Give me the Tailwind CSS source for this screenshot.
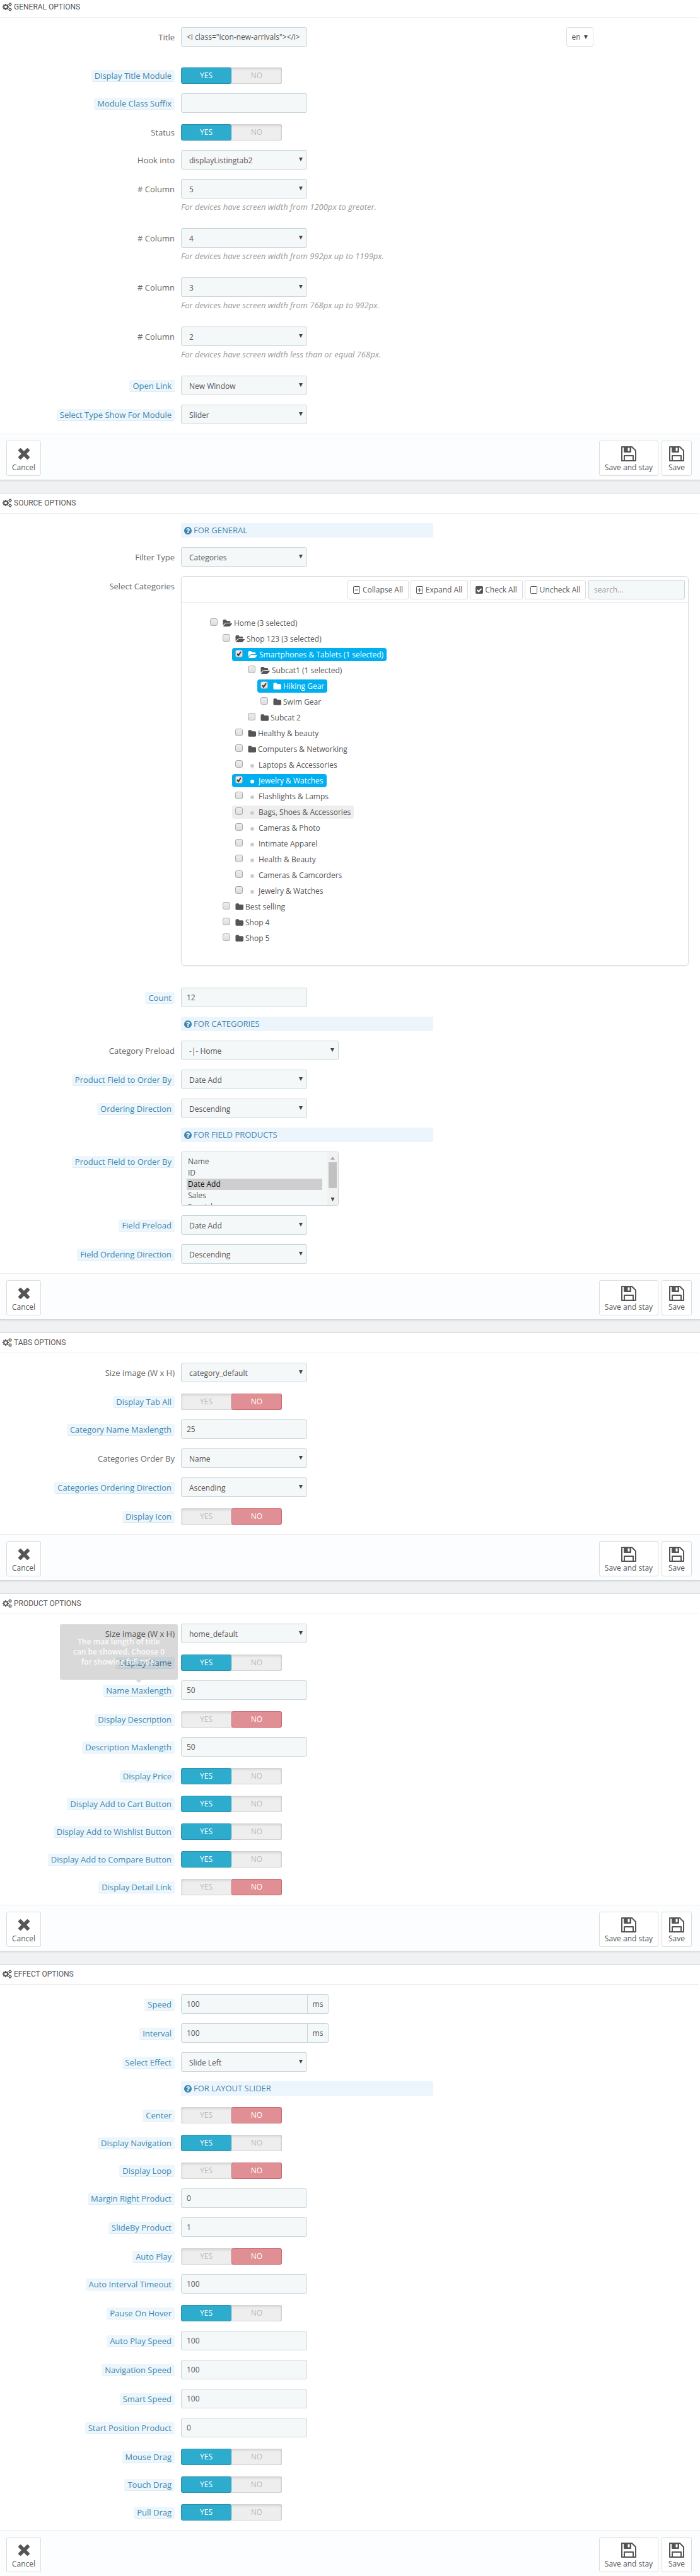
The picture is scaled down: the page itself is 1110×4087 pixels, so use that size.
<!DOCTYPE html>
<html lang="en">
<head>
<meta charset="utf-8">
<meta name="viewport" content="width=device-width, initial-scale=1">
<title>Listing tabs module options</title>
<script src="https://cdn.jsdelivr.net/npm/@tailwindcss/browser@4"></script>
</head>
<body class="bg-[#eff1f2] font-['Open_Sans',sans-serif] text-xs text-[#555]">

<svg class="hidden" aria-hidden="true">
  <symbol id="cogs" viewBox="0 0 1920 1792"><path fill="currentColor" d="M896 896q0-106-75-181t-181-75-181 75-75 181 75 181 181 75 181-75 75-181zm768 512q0-52-38-90t-90-38-90 38-38 90q0 53 37.5 90.5t90.5 37.5 90.5-37.5 37.5-90.5zm0-1024q0-52-38-90t-90-38-90 38-38 90q0 53 37.5 90.5t90.5 37.5 90.5-37.5 37.5-90.5zm-384 421v185q0 10-7 19.5t-16 10.5l-155 24q-11 35-32 76 34 48 90 115 7 11 7 20 0 12-7 19-23 30-82.5 89.5t-78.5 59.5q-11 0-21-7l-115-90q-37 19-77 31-11 108-23 155-7 24-30 24h-186q-11 0-20-7.5t-10-17.5l-23-153q-34-10-75-31l-118 89q-7 7-20 7-11 0-21-8-144-133-144-160 0-9 7-19 10-14 41-53t47-61q-23-44-35-82l-152-24q-10-1-17-9.5t-7-19.5v-185q0-10 7-19.5t16-10.5l155-24q11-35 32-76-34-48-90-115-7-11-7-20 0-12 7-20 22-30 82-89t79-59q11 0 21 7l115 90q34-18 77-32 11-108 23-154 7-24 30-24h186q11 0 20 7.5t10 17.5l23 153q34 10 75 31l118-89q8-7 20-7 11 0 21 8 144 133 144 160 0 8-7 19-12 16-42 54t-45 60q23 48 34 82l152 23q10 2 17 10.5t7 19.5zm640 533v140q0 16-149 31-12 27-30 52 51 113 51 138 0 4-4 7-122 71-124 71-8 0-46-47t-52-68q-20 2-30 2t-30-2q-14 21-52 68t-46 47q-2 0-124-71-4-3-4-7 0-25 51-138-18-25-30-52-149-15-149-31v-140q0-16 149-31 13-29 30-52-51-113-51-138 0-4 4-7 4-2 35-20t59-34 30-16q8 0 46 46.5t52 67.5q20-2 30-2t30 2q51-71 92-112l6-2q4 0 124 70 4 3 4 7 0 25-51 138 17 23 30 52 149 15 149 31zm0-1024v140q0 16-149 31-12 27-30 52 51 113 51 138 0 4-4 7-122 71-124 71-8 0-46-47t-52-68q-20 2-30 2t-30-2q-14 21-52 68t-46 47q-2 0-124-71-4-3-4-7 0-25 51-138-18-25-30-52-149-15-149-31v-140q0-16 149-31 13-29 30-52-51-113-51-138 0-4 4-7 4-2 35-20t59-34 30-16q8 0 46 46.5t52 67.5q20-2 30-2t30 2q51-71 92-112l6-2q4 0 124 70 4 3 4 7 0 25-51 138 17 23 30 52 149 15 149 31z"/></symbol>
  <symbol id="folder" viewBox="0 0 1728 1792"><path fill="currentColor" d="M1728 608v704q0 92-66 158t-158 66h-1216q-92 0-158-66t-66-158v-960q0-92 66-158t158-66h320q92 0 158 66t66 158v32h672q92 0 158 66t66 158z"/></symbol>
  <symbol id="folder-open" viewBox="0 0 1943 1792"><path fill="currentColor" d="M1943 952q0 31-31 66l-336 396q-43 51-120.5 86.5t-143.5 35.5h-1088q-34 0-60.5-13t-26.5-43q0-31 31-66l336-396q43-51 120.5-86.5t143.5-35.5h1088q34 0 60.5 13t26.5 43zm-343-344v160h-832q-94 0-197 47.5t-164 119.5l-337 396-5 6q0-4-.5-12.5t-.5-12.5v-960q0-92 66-158t158-66h320q92 0 158 66t66 158v32h544q92 0 158 66t66 158z"/></symbol>
  <symbol id="question" viewBox="128 128 1536 1536"><path fill="currentColor" d="M1024 1376v-192q0-14-9-23t-23-9h-192q-14 0-23 9t-9 23v192q0 14 9 23t23 9h192q14 0 23-9t9-23zm256-672q0-88-55.5-163t-138.5-116-170-41q-243 0-371 213-15 24 8 42l132 100q7 6 19 6 16 0 25-12 53-68 86-92 34-24 86-24 48 0 85.5 26t37.5 59q0 38-20 61t-68 45q-63 28-115.5 86.5t-52.5 125.5v36q0 14 9 23t23 9h192q14 0 23-9t9-23q0-19 21.5-49.5t54.5-49.5q32-18 49-28.5t46-35 44.5-48 28-60.5 12.5-81zm384 192q0 209-103 385.5t-279.5 279.5-385.5 103-385.5-103-279.5-279.5-103-385.5 103-385.5 279.5-279.5 385.5-103 385.5 103 279.5 279.5 103 385.5z"/></symbol>
  <symbol id="times" viewBox="302 366 1188 1188"><path fill="currentColor" d="M1490 1322q0 40-28 68l-136 136q-28 28-68 28t-68-28l-294-294-294 294q-28 28-68 28t-68-28l-136-136q-28-28-28-68t28-68l294-294-294-294q-28-28-28-68t28-68l136-136q28-28 68-28t68 28l294 294 294-294q28-28 68-28t68 28l136 136q28 28 28 68t-28 68l-294 294 294 294q28 28 28 68z"/></symbol>
  <symbol id="floppy" viewBox="0 0 24 24"><path fill="none" stroke="currentColor" stroke-width="2" stroke-linejoin="round" d="M1 1h16l6 6v16H1zM5 23v-8h14v8M5 1v8h10V1"/><path fill="currentColor" d="M5 1h5v8H5z"/><path fill="none" stroke="currentColor" stroke-width="1" d="M10 2h4v6h-4z"/></symbol>
  <symbol id="minus-box" viewBox="0 0 12 12"><path fill="none" stroke="currentColor" d="M1.5.5h8a1 1 0 0 1 1 1v9a1 1 0 0 1-1 1h-8a1 1 0 0 1-1-1v-9a1 1 0 0 1 1-1zM3 6h5"/></symbol>
  <symbol id="plus-box" viewBox="0 0 12 12"><path fill="none" stroke="currentColor" d="M1.5.5h8a1 1 0 0 1 1 1v9a1 1 0 0 1-1 1h-8a1 1 0 0 1-1-1v-9a1 1 0 0 1 1-1zM2.500 6h6M5.500 3v6"/></symbol>
  <symbol id="check-box" viewBox="0 0 12 12"><rect width="12" height="12" rx="2" fill="currentColor"/><path fill="none" stroke="#fff" stroke-width="2" d="M2.500 6l2.500 2.500 4.500-4.500"/></symbol>
  <symbol id="empty-box" viewBox="0 0 12 12"><rect x=".5" y=".5" width="10" height="11" rx="1" fill="none" stroke="currentColor"/></symbol>
  <symbol id="caret" viewBox="0 0 6 6"><path fill="#444" d="M0 0h6L3 6z"/></symbol>
  <symbol id="caret-up" viewBox="0 0 6 6"><path fill="#a3a3a3" d="M0 5h6L3 1z"/></symbol>
  <symbol id="tick" viewBox="0 0 12 12"><path fill="none" stroke="#333" stroke-width="2" d="M3 6l2 3 4-6"/></symbol>
</svg>

<form id="options" class="flex flex-col gap-5"></form>

<script>
  const icon = (name, cls) => `<svg class="${cls}" aria-hidden="true"><use href="#${name}"/></svg>`;
  const FIELD = 'h-[31px] border border-[#c7d6db] bg-[#f5f8f9] text-xs text-[#555]';
  let count = 0;

  /* A form row: label column on the left, control on the right.
     Labels with a leading "?" carry a help badge. */
  function row(label, build, options = {}) {
    const id = `f${++count}`;
    const help = label.startsWith('?');
    const text = help ? label.slice(1) : label;
    const tip = options.tip ? `
      <span role="tooltip" class="absolute -right-[5px] bottom-full mb-2 w-[187px] rounded-[3px] bg-black/15 px-5 py-5 text-center text-xs leading-4 font-semibold whitespace-normal text-white/85">${options.tip}
        <span class="absolute top-full left-[120px] border-x-[5px] border-t-[5px] border-x-transparent border-t-black/15"></span>
      </span>` : '';
    const inner = help
      ? `<span class="relative inline-block rounded-[3px] border-b border-[#d8ecf7] bg-[#edf6fb] px-[5px] text-[#3f86b0]">${text}${tip}</span>`
      : text;
    const tag = options.group ? 'span' : 'label';
    const link = options.group ? `id="${id}"` : `for="${id}"`;
    return `<div class="mb-[15px] flex gap-2.5">
      <div class="w-[277px] shrink-0 pt-[7px] text-right text-[13px] leading-[18px] text-[#666]"><${tag} ${link} class="inline-block whitespace-nowrap">${inner}</${tag}></div>
      <div class="min-w-0 flex-1">${build(id)}</div>
    </div>`;
  }

  const input = (label, value, options = {}) => row(label, id =>
    `<input id="${id}" type="text" value="${value}" class="${FIELD} block w-[200px] rounded-[3px] px-2">`, options);

  const unit = (label, value) => row(label, id => `<div class="flex">
      <input id="${id}" type="text" value="${value}" class="${FIELD} w-[201px] rounded-l-[3px] px-2">
      <span class="${FIELD} -ml-px flex w-[34px] items-center justify-center rounded-r-[3px]">ms</span>
    </div>`);

  const select = (label, value, help = '', width = 'w-[200px]') => row(label, id => `<div class="relative ${width}">
      <select id="${id}" class="${FIELD} block w-full appearance-none rounded-[3px] pt-0.5 pr-6 pl-3"><option>${value}</option></select>
      ${icon('caret', 'pointer-events-none absolute top-3 right-[7px] size-1.5')}
    </div>${help && `<p class="mt-[5px] pb-[10px] text-[13px] leading-[17px] text-[#999] italic">${help}</p>`}`);

  const toggle = (label, on) => row(label, id => `<div class="pt-[3px]"><div role="radiogroup" aria-labelledby="${id}" class="flex h-[26px] w-40 rounded-[3px] bg-[#eee] text-xs text-[#bbb] shadow-[inset_0_2px_4px_rgba(0,0,0,0.15),inset_0_-1px_0_#d8d8d8,inset_-1px_0_0_#ddd]">
      <label class="flex flex-1 items-center justify-center rounded-[3px] border border-transparent has-checked:border-[#2791ae] has-checked:bg-[#2eacce] has-checked:text-white"><input type="radio" name="${id}" class="sr-only" ${on ? 'checked' : ''}>YES</label>
      <label class="flex flex-1 items-center justify-center rounded-[3px] border border-transparent has-checked:border-[#ca666d] has-checked:bg-[#e08f95] has-checked:text-white"><input type="radio" name="${id}" class="sr-only" ${on ? '' : 'checked'}>NO</label>
    </div></div>`, { group: true });

  const banner = text => `<div class="mb-[15px] ml-[287px] flex h-[23px] w-[400px] items-center gap-[3px] rounded-[2px] bg-[#edf5fc] px-[5px] text-[13px] text-[#3f86b0]">${icon('question', 'size-3')}<h3>${text}</h3></div>`;

  const title = () => row('Title', id => `<div class="mb-[15px] grid grid-cols-[611px_auto]">
      <input id="${id}" type="text" value="&lt;i class=&quot;icon-new-arrivals&quot;&gt;&lt;/i&gt;" class="${FIELD} block w-[200px] rounded-[3px] px-2">
      <button type="button" class="flex h-[31px] w-[43px] items-center justify-center gap-1 rounded-[3px] border border-[#ddd] bg-white">en ${icon('caret', 'h-1.5 w-2')}</button>
    </div>`);

  const list = label => row(label, id => `<div class="relative w-[250px]">
      <select id="${id}" multiple size="4" class="block h-[86px] w-full [scrollbar-width:none] overflow-y-scroll rounded-[3px] border border-[#c7d6db] bg-[#f5f8f9] py-1.5 pr-[25px] pl-2 text-xs text-[#555]">
        ${['Name', 'ID', 'Date Add', 'Sales', 'Special', 'Position'].map(o => `<option class="h-[18px] px-0.5 py-0 leading-[18px]" ${o === 'Date Add' ? 'selected' : ''}>${o}</option>`).join('')}
      </select>
      <div class="pointer-events-none absolute inset-y-px right-px flex w-[17px] flex-col items-center justify-between bg-[#f1f1f1] py-[6px]" aria-hidden="true">
        ${icon('caret-up', 'size-[7px]')}<span class="mb-3 h-[41px] w-[13px] bg-[#c1c1c1]"></span>${icon('caret', 'h-1.5 w-[7px]')}
      </div>
    </div>`);

  /* Category tree: [name, kind, children, state] */
  const TREE = ['Home (3 selected)', 'open', [
    ['Shop 123 (3 selected)', 'open', [
      ['Smartphones &amp; Tablets (1 selected)', 'open', [
        ['Subcat1 (1 selected)', 'open', [
          ['Hiking Gear', 'folder', [], 'checked'],
          ['Swim Gear', 'folder'],
        ]],
        ['Subcat 2', 'folder'],
      ], 'checked'],
      ['Healthy &amp; beauty', 'folder'],
      ['Computers &amp; Networking', 'folder'],
      ['Laptops &amp; Accessories', 'leaf'],
      ['Jewelry &amp; Watches', 'leaf', [], 'checked'],
      ['Flashlights &amp; Lamps', 'leaf'],
      ['Bags, Shoes &amp; Accessories', 'leaf', [], 'hover'],
      ['Cameras &amp; Photo', 'leaf'],
      ['Intimate Apparel', 'leaf'],
      ['Health &amp; Beauty', 'leaf'],
      ['Cameras &amp; Camcorders', 'leaf'],
      ['Jewelry &amp; Watches', 'leaf'],
    ]],
    ['Best selling', 'folder'],
    ['Shop 4', 'folder'],
    ['Shop 5', 'folder'],
  ]];
  const MARK = {
    open: icon('folder-open', 'mr-[3px] h-3.5 w-[15px]'),
    folder: icon('folder', 'mr-[3px] h-3.5 w-[13px]'),
    leaf: '<span class="mt-0.5 mr-[7px] ml-1 size-1.5 rounded-full bg-[#ccc] group-has-checked:bg-white"></span>',
  };
  const node = ([name, kind, kids = [], state = '']) => `<li>
      <label class="group mb-1 flex h-[21px] w-fit items-center rounded-[4px] px-[5px] text-[#555] has-checked:bg-[#00aff0] has-checked:text-white ${state === 'hover' ? 'bg-[#eee]' : ''}">
        <span class="mr-2 mb-1 grid">
          <input type="checkbox" class="peer col-start-1 row-start-1 size-3 appearance-none rounded-[3px] border border-[#aaa] bg-linear-to-b from-[#eee] to-[#ddd]" ${state === 'checked' ? 'checked' : ''}>
          ${icon('tick', 'pointer-events-none col-start-1 row-start-1 hidden size-3 peer-checked:block')}
        </span>${MARK[kind]}<span>${name}</span>
      </label>
      ${kids.length ? `<ul class="pl-5">${kids.map(node).join('')}</ul>` : ''}
    </li>`;

  const tool = (name, width, text) => `<button type="button" class="${width} flex h-[31px] items-center justify-center gap-[3px] rounded-[3px] border border-[#ddd] bg-white whitespace-nowrap">${icon(name, 'size-3')}${text}</button>`;
  const categories = () => row('Select Categories', () => `<div class="mr-[18px] mb-5 rounded-[5px] border border-[#ddd] shadow-[0_1px_2px_rgba(0,0,0,0.08)]">
      <div class="flex h-[42px] items-center justify-end gap-[3px] border-b border-[#ddd] pr-[5px]">
        ${tool('minus-box', 'w-[97px]', 'Collapse All')}${tool('plus-box', 'w-[91px]', 'Expand All')}${tool('check-box', 'w-[84px]', 'Check All')}${tool('empty-box', 'w-[97px]', 'Uncheck All')}
        <input type="search" placeholder="search..." aria-label="Search categories" class="${FIELD} ml-px w-[153px] rounded-[3px] px-2 placeholder:text-[#999]">
      </div>
      <ul class="pt-[21px] pb-7 pl-10">${node(TREE)}</ul>
    </div>`, { group: true });

  const action = (name, size, width, text) => `<button type="button" class="${width} flex h-14 flex-col items-center justify-end rounded-[3px] border border-[#ddd] bg-white pb-1 whitespace-nowrap text-[#555]"><span class="flex h-6 items-center">${icon(name, size)}</span><span class="mt-0.5 leading-4">${text}</span></button>`;

  const panel = (heading, rows) => `<section class="group/panel border-y border-[#d3d8db] bg-white shadow-[0_2px_2px_rgba(0,0,0,0.06)] first:border-t-0 last:border-b-0">
      <h2 class="mr-0.5 mb-[15px] flex items-end gap-[3px] border-b border-[#eee] pt-[7px] pb-2 pl-1 font-[Roboto,sans-serif] text-xs leading-4 group-first/panel:pt-[3px]">${icon('cogs', 'mb-px h-3.5 w-[15px]')}${heading}</h2>
      ${rows.join('')}
      <footer class="flex h-[73px] gap-[5px] border-t border-[#eee] bg-[#fcfdfe] pt-[10px] pr-[13px] pl-[10px]">
        ${action('times', 'size-[18px]', 'w-[55px]', 'Cancel')}
        <span class="flex-1"></span>
        ${action('floppy', 'size-6', 'w-[94px]', 'Save and stay')}${action('floppy', 'size-6', 'w-12', 'Save')}
      </footer>
    </section>`;

  document.getElementById('options').innerHTML = [
    panel('GENERAL OPTIONS', [
      title(),
      toggle('?Display Title Module', true),
      input('?Module Class Suffix', ''),
      toggle('Status', true),
      select('Hook into', 'displayListingtab2'),
      select('# Column', '5', 'For devices have screen width from 1200px to greater.'),
      select('# Column', '4', 'For devices have screen width from 992px up to 1199px.'),
      select('# Column', '3', 'For devices have screen width from 768px up to 992px.'),
      select('# Column', '2', 'For devices have screen width less than or equal 768px.'),
      select('?Open Link', 'New Window'),
      select('?Select Type Show For Module', 'Slider'),
    ]),
    panel('SOURCE OPTIONS', [
      banner('FOR GENERAL'),
      select('Filter Type', 'Categories'),
      categories(),
      input('?Count', '12'),
      banner('FOR CATEGORIES'),
      select('Category Preload', '-|- Home', '', 'w-[250px]'),
      select('?Product Field to Order By', 'Date Add'),
      select('?Ordering Direction', 'Descending'),
      banner('FOR FIELD PRODUCTS'),
      list('?Product Field to Order By'),
      select('?Field Preload', 'Date Add'),
      select('?Field Ordering Direction', 'Descending'),
    ]),
    panel('TABS OPTIONS', [
      select('Size image (W x H)', 'category_default'),
      toggle('?Display Tab All', false),
      input('?Category Name Maxlength', '25'),
      select('Categories Order By', 'Name'),
      select('?Categories Ordering Direction', 'Ascending'),
      toggle('?Display Icon', false),
    ]),
    panel('PRODUCT OPTIONS', [
      select('Size image (W x H)', 'home_default'),
      toggle('?Display Name', true),
      input('?Name Maxlength', '50', { tip: 'The max length of title can be showed. Choose 0 for showing full title.' }),
      toggle('?Display Description', false),
      input('?Description Maxlength', '50'),
      toggle('?Display Price', true),
      toggle('?Display Add to Cart Button', true),
      toggle('?Display Add to Wishlist Button', true),
      toggle('?Display Add to Compare Button', true),
      toggle('?Display Detail Link', false),
    ]),
    panel('EFFECT OPTIONS', [
      unit('?Speed', '100'),
      unit('?Interval', '100'),
      select('?Select Effect', 'Slide Left'),
      banner('FOR LAYOUT SLIDER'),
      toggle('?Center', false),
      toggle('?Display Navigation', true),
      toggle('?Display Loop', false),
      input('?Margin Right Product', '0'),
      input('?SlideBy Product', '1'),
      toggle('?Auto Play', false),
      input('?Auto Interval Timeout', '100'),
      toggle('?Pause On Hover', true),
      input('?Auto Play Speed', '100'),
      input('?Navigation Speed', '100'),
      input('?Smart Speed', '100'),
      input('?Start Position Product', '0'),
      toggle('?Mouse Drag', true),
      toggle('?Touch Drag', true),
      toggle('?Pull Drag', true),
    ]),
  ].join('');
</script>
</body>
</html>
